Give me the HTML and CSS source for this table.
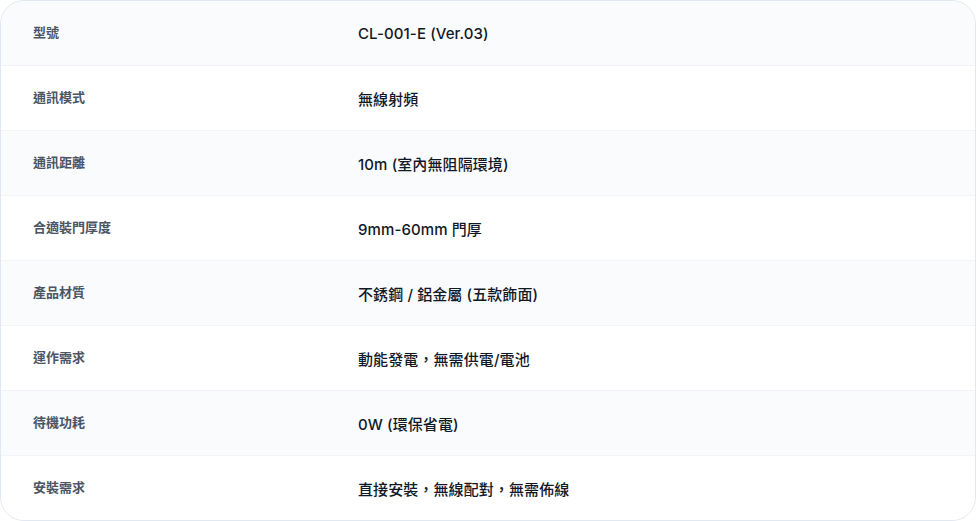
FILE: index.html
```html
<!DOCTYPE html>
<html lang="zh-Hant">
<head>
<meta charset="utf-8">
<link rel="stylesheet" href="styles.css">
</head>
<body>
<div class="card">
  <div class="row alt"><div class="label">型號</div><div class="value">CL-001-E (Ver.03)</div></div>
  <div class="row"><div class="label">通訊模式</div><div class="value">無線射頻</div></div>
  <div class="row alt"><div class="label">通訊距離</div><div class="value">10m (室內無阻隔環境)</div></div>
  <div class="row"><div class="label">合適裝門厚度</div><div class="value">9mm-60mm 門厚</div></div>
  <div class="row alt"><div class="label">產品材質</div><div class="value">不銹鋼 / 鋁金屬 (五款飾面)</div></div>
  <div class="row"><div class="label">運作需求</div><div class="value">動能發電，無需供電/電池</div></div>
  <div class="row alt"><div class="label">待機功耗</div><div class="value">0W (環保省電)</div></div>
  <div class="row"><div class="label">安裝需求</div><div class="value">直接安裝，無線配對，無需佈線</div></div>
</div>
</body>
</html>
```
FILE: styles.css
```css
html, body {
  margin: 0;
  padding: 0;
  background: #ffffff;
}
body {
  font-family: Inter, "Noto Sans CJK TC", sans-serif;
}
.card {
  width: 976px;
  height: 521px;
  box-sizing: border-box;
  border: 1px solid #e2e8f0;
  border-radius: 24px;
  overflow: hidden;
  display: flex;
  flex-direction: column;
}
.row {
  height: 64px;
  display: flex;
  align-items: center;
  border-bottom: 1px solid #f1f5f9;
  background: #ffffff;
}
.row:last-child {
  border-bottom: none;
}
.row.alt {
  background: #fafbfc;
}
.label {
  width: 325px;
  padding: 0 32px;
  box-sizing: border-box;
  flex: none;
  font-size: 13px;
  font-weight: 600;
  color: #4b5563;
  line-height: 20px;
  margin-top: -2px;
}
.value {
  padding: 0 32px;
  font-size: 15px;
  font-weight: 500;
  color: #111827;
  letter-spacing: 0.1px;
}
```
